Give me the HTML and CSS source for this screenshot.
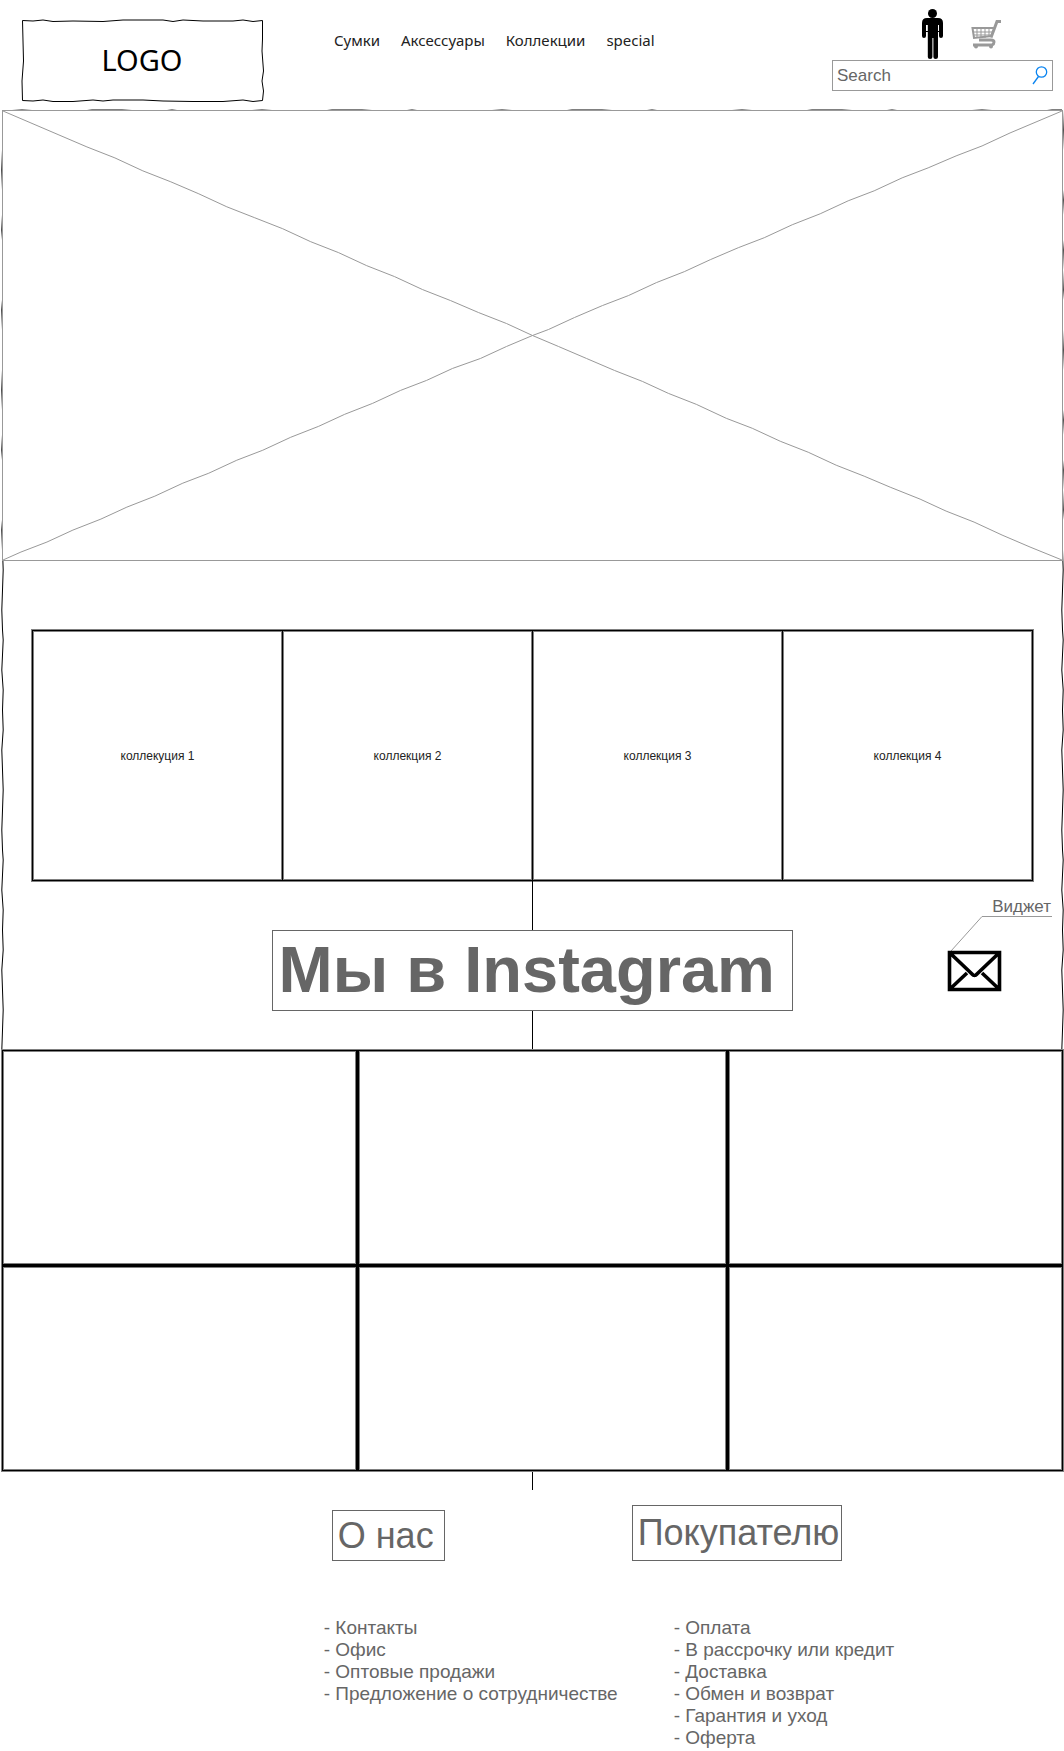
FILE: index.html
```html
<!DOCTYPE html>
<html lang="ru">
<head>
<meta charset="utf-8">
<meta name="viewport" content="width=device-width, initial-scale=1">
<title>Магазин сумок и аксессуаров</title>
<link rel="stylesheet" href="styles.css">
</head>
<body>
<svg class="defs" width="0" height="0" aria-hidden="true">
  <defs>
    <pattern id="rough-v" width="4" height="220" patternUnits="userSpaceOnUse">
      <path class="rough" d="M2.500 0L3.200 20L2.500 40L1.800 60L2.500 80L3.200 90L1.800 120L3.200 140L2.500 160L3.200 180L1.800 200L2.500 220"/>
    </pattern>
    <pattern id="rough-h" width="240" height="4" patternUnits="userSpaceOnUse">
      <path class="rough" d="M0 2L20 1L40 2L60 3L80 2L90 1L120 1L140 2L150 3L170 1L180 2L210 3L240 2"/>
    </pattern>
  </defs>
</svg>

<header class="header">
  <a class="logo" href="#">
    <svg class="logo-frame" viewBox="0 0 244 84" preserveAspectRatio="none" aria-hidden="true">
      <path class="rough" d="M1.500 1.500L12 2L22 1L32 2.500L52 2L82 2.500L102 1L142 1L152 2.500L162 1L182 2L212 2L222 1L232 2.500L241.500 1.500L241.500 20L241 32L242.500 52L241 62L242.500 72L241.500 81.500L232 82.500L222 81L202 82.500L172 82.500L142 82L122 81L92 81L82 82L72 81L52 82.500L32 82.500L22 81L12 82L1.500 81.500L1 62L2.500 42L2 22Z"/>
    </svg>
    LOGO
  </a>
  <nav class="nav">
    <a href="#">Сумки</a>
    <a href="#">Аксессуары</a>
    <a href="#">Коллекции</a>
    <a href="#">special</a>
  </nav>
  <div class="tools">
    <div class="icons">
      <a href="#" aria-label="Профиль">
        <svg width="22" height="51" viewBox="0 0 22 51">
          <circle cx="10.500" cy="4.500" r="4.500"/>
          <path d="M5 9h11q5 0 5 5V27q0 2-2 2t-2-2V16h-1v32q0 2-2.300 2t-2.300-2V29h-1v19q0 2-2.300 2t-2.300-2V16H4v11q0 2-2 2t-2-2V14q0-5 5-5z"/>
          <path d="M0 22.500h21" stroke="#000"/>
        </svg>
      </a>
      <a href="#" aria-label="Корзина">
        <svg width="30" height="29" viewBox="0 0 30 29" fill="none" stroke="#999">
          <path stroke-width="3" d="M30 1.500h-4L20 17.500M2 25h20M8 20h12q3 0 3 2t-2 3"/>
          <path stroke-width="2" d="M24 8H1.500L3 18l18-2"/>
          <path d="M2 12h20M2 15h19M6 8v10M10 8v10M14 8v10M18 8v9"/>
          <circle cx="5" cy="26.500" r="2" fill="#999" stroke="none"/>
          <circle cx="20" cy="26.500" r="2" fill="#999" stroke="none"/>
        </svg>
      </a>
    </div>
    <form class="search" role="search">
      <input type="search" placeholder="Search" aria-label="Search">
      <button type="submit" aria-label="Найти">
        <svg width="16" height="19" viewBox="0 0 16 19" fill="none" stroke="#0a84f0" stroke-width="1.300">
          <circle cx="9.500" cy="6" r="5.200"/><path d="M6.500 10.500L1 18"/>
        </svg>
      </button>
    </form>
  </div>
</header>

<main class="page">
  <svg class="edge edge-top" aria-hidden="true"><rect width="100%" height="4" fill="url(#rough-h)"/></svg>
  <svg class="edge edge-bottom" aria-hidden="true"><rect width="100%" height="4" fill="url(#rough-h)"/></svg>
  <svg class="edge edge-left" aria-hidden="true"><rect width="4" height="100%" fill="url(#rough-v)"/></svg>
  <svg class="edge edge-right" aria-hidden="true"><rect width="4" height="100%" fill="url(#rough-v)"/></svg>

  <section class="hero" aria-label="Баннер">
    <svg viewBox="0 0 1060 450" preserveAspectRatio="none" aria-hidden="true">
      <path d="M0 0L28 12L56 24L84 36L112 47L140 60L168 71L196 83L224 96L252 107L280 118L308 131L336 142L364 155L392 166L420 179L448 190L476 202L504 213L530 225L556 236L584 248L612 260L640 271L666 283L694 294L724 308L750 318L778 331L806 342L834 355L862 366L888 377L918 389L944 401L972 412L1000 425L1028 437L1060 450"/>
      <path d="M1060 0L1034 11L1008 22L980 35L954 45L926 57L900 67L872 80L846 90L818 103L790 114L762 127L736 137L708 149L682 161L654 172L626 185L600 195L572 207L546 219L530 225L504 236L478 248L450 258L424 270L398 280L370 293L342 304L316 316L288 327L260 340L234 350L206 363L180 373L152 386L124 397L98 409L70 420L44 432L18 442L0 450"/>
    </svg>
  </section>

  <section class="collections">
    <a href="#">коллекуция 1</a>
    <a href="#">коллекция 2</a>
    <a href="#">коллекция 3</a>
    <a href="#">коллекция 4</a>
  </section>

  <section class="instagram">
    <div class="instagram-head">
      <h1>Мы в Instagram</h1>
      <a class="widget" href="#">
        <span>Виджет</span>
        <svg width="106" height="76" viewBox="0 0 106 76" fill="none" aria-hidden="true">
          <path stroke="#999" d="M105 .500H35L4 35"/>
          <path stroke="#000" stroke-width="3.600" d="M2.500 36.500h50v37h-50zM3 37l22 21q2.500 3 5 0l22-21M3 73l17-16M52 73L35 57"/>
        </svg>
      </a>
    </div>
    <div class="gallery">
      <div></div><div></div><div></div>
      <div></div><div></div><div></div>
    </div>
  </section>
</main>

<footer class="footer">
  <section>
    <h2 class="about">О нас</h2>
    <ul>
      <li><a href="#">- Контакты</a></li>
      <li><a href="#">- Офис</a></li>
      <li><a href="#">- Оптовые продажи</a></li>
      <li><a href="#">- Предложение о сотрудничестве</a></li>
    </ul>
  </section>
  <section>
    <h2 class="buyer">Покупателю</h2>
    <ul class="buyer-list">
      <li><a href="#">- Оплата</a></li>
      <li><a href="#">- В рассрочку или кредит</a></li>
      <li><a href="#">- Доставка</a></li>
      <li><a href="#">- Обмен и возврат</a></li>
      <li><a href="#">- Гарантия и уход</a></li>
      <li><a href="#">- Оферта</a></li>
    </ul>
  </section>
</footer>
</body>
</html>
```
FILE: styles.css
```css
* { box-sizing: border-box; }

body {
  margin: 0;
  background: #fff;
  color: #666;
  font-family: "Liberation Sans", Arial, sans-serif;
}

a { color: inherit; text-decoration: none; }
h1, h2, ul { margin: 0; padding: 0; font-weight: normal; }
ul { list-style: none; }
svg { display: block; }

.defs { position: absolute; }
.rough { fill: none; stroke: #000; }

.header {
  display: flex;
  align-items: flex-start;
  height: 110px;
  padding: 0 11px 0 21px;
}

.logo {
  position: relative;
  display: flex;
  align-items: center;
  justify-content: center;
  width: 244px;
  height: 84px;
  margin-top: 19px;
  padding: 0 2px 2px 0;
  color: #000;
  font: 29px/40px "Noto Sans", sans-serif;
}
.logo-frame { position: absolute; inset: 0; width: 100%; height: 100%; }

.nav {
  display: flex;
  gap: 21px;
  margin: 29px 0 0 69px;
  color: #222;
  font: 15px/22px "Noto Sans", sans-serif;
}

.tools { width: 221px; margin-left: auto; }
.icons {
  display: flex;
  align-items: center;
  justify-content: flex-end;
  gap: 27px;
  height: 52px;
  margin: 8px 52px 0 0;
}

.search {
  display: flex;
  align-items: center;
  height: 31px;
  border: 1px solid #999;
}
.search input {
  flex: 1;
  min-width: 0;
  padding: 0 0 0 4px;
  border: 0;
  outline: 0;
  background: none;
  color: #666;
  font: 17px/20px "Liberation Sans", Arial, sans-serif;
}
.search input::placeholder { color: #666; opacity: 1; }
.search button { padding: 0 4px 0 0; border: 0; background: none; }

.page { position: relative; }

.edge { position: absolute; }
.edge-top { top: -1px; left: 2px; width: calc(100% - 4px); height: 4px; }
.edge-bottom { bottom: -1px; left: 2px; width: calc(100% - 4px); height: 4px; }
.edge-left { top: 0; left: 0; width: 4px; height: 100%; }
.edge-right { top: 0; right: 0; width: 4px; height: 100%; }

/* The banner and the gallery cover the inner side of the rough page edge. */
.hero, .gallery { position: relative; margin: 0 1px 0 2px; }

.hero {
  height: 451px;
  border: 1px solid #999;
  background: #fff;
}
.hero svg { width: 100%; height: 100%; }
.hero path { fill: none; stroke: #999; vector-effect: non-scaling-stroke; }

.collections {
  display: grid;
  grid-template-columns: repeat(4, 1fr);
  gap: 1px;
  margin: 69px 31px 0 32px;
  padding: 1px;
  background: #000;
  box-shadow: 0 0 0 1px #808080;
}
.collections a {
  display: flex;
  align-items: center;
  justify-content: center;
  height: 249px;
  background: #fff;
  box-shadow: inset 0 0 0 1px #808080;
  color: #222;
  font-size: 12px;
  line-height: 16px;
}

.instagram-head {
  position: relative;
  display: flex;
  justify-content: center;
  padding: 49px 0 39px;
  background: linear-gradient(#000, #000) center / 1px 100% no-repeat;
}
.instagram-head h1 {
  width: 521px;
  height: 81px;
  padding-left: 6px;
  border: 1px solid #666;
  background: #fff;
  font-size: 65px;
  font-weight: bold;
  line-height: 78px;
}

.widget {
  position: absolute;
  top: 16px;
  right: 11px;
  font-size: 17px;
  line-height: 19px;
  text-align: right;
}
.widget span { display: block; padding-right: 2px; }

.gallery {
  display: grid;
  grid-template-columns: 353fr 367fr 333fr;
  grid-template-rows: 213px 203px;
  gap: 3px;
  padding: 1px;
  background: #000;
  box-shadow: 0 0 0 1px #808080;
}
.gallery div { background: #fff; box-shadow: inset 0 0 0 1px #808080; }

.footer {
  display: flex;
  justify-content: center;
  gap: 14px;
  padding: 34px 0 2px 154px;
  background: linear-gradient(#000, #000) top center / 1px 19px no-repeat;
}
.footer h2 {
  width: fit-content;
  border: 1px solid #666;
  font-size: 36px;
}
.footer ul {
  margin-top: 56px;
  font-size: 19px;
  line-height: 22px;
}
.footer .about { margin: 5px 0 0 8px; padding: 0 10px 0 5px; line-height: 49px; }
.footer .buyer { padding: 0 2px 0 5px; line-height: 54px; }
.footer .buyer-list { padding-left: 42px; }
```
